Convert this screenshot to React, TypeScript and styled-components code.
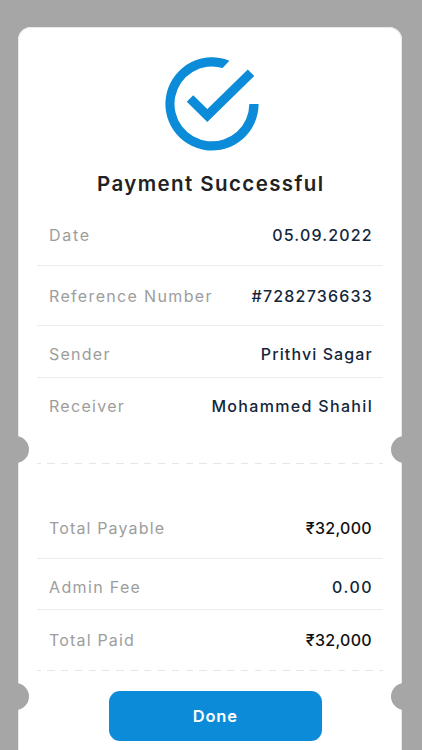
import React from 'react';
import styled, { createGlobalStyle } from 'styled-components';

const GlobalStyle = createGlobalStyle`
  *, *::before, *::after { box-sizing: border-box; }
  html, body { margin: 0; background: #a6a6a6; }
  body { font-family: Inter, "Liberation Sans", sans-serif; overflow: hidden; }
`;

const Screen = styled.div`
  display: flex;
  height: 750px;
  padding: 27px 20px 0 18px;
  overflow: hidden;
  background: #a6a6a6;
`;

const Card = styled.main`
  position: relative;
  display: flex;
  flex: 1;
  flex-direction: column;
  height: 760px;
  padding: 30px 19px 0;
  border-radius: 13px 13px 0 0;
  background: #fff;
  box-shadow: inset 0 0 0 1px #e9e9e9;
`;

const Notch = styled.span<{ $side: 'left' | 'right'; $top: number }>`
  position: absolute;
  top: ${(p) => p.$top}px;
  ${(p) => p.$side}: -16px;
  width: 27px;
  height: 27px;
  border-radius: 50%;
  background: #a6a6a6;
`;

const SuccessIcon = styled.svg`
  display: block;
  flex: none;
  width: 94px;
  height: 94px;
  margin-left: 127.5px;
`;

const Title = styled.h1`
  height: 26px;
  margin: 20px 0 7px 60px;
  color: #222;
  font-size: 20.5px;
  font-weight: 600;
  line-height: 26px;
  letter-spacing: 1.4px;
  white-space: nowrap;
`;

const Details = styled.dl`
  margin: 0;
`;

const Row = styled.div<{ $height: number; $shift?: number; $last?: boolean }>`
  display: flex;
  align-items: center;
  justify-content: space-between;
  height: ${(p) => p.$height}px;
  padding: ${(p) => p.$shift ?? 0}px 11.3px 0 12px;
  border-bottom: ${(p) => (p.$last ? '0' : '1px solid #ececec')};
`;

const Label = styled.dt<{ $tracking: number }>`
  color: #9d9d9d;
  font-size: 16px;
  line-height: 20px;
  letter-spacing: ${(p) => p.$tracking}px;
  white-space: nowrap;
`;

const Value = styled.dd<{ $tracking: number; $amount?: boolean }>`
  margin: 0 ${(p) => -p.$tracking}px 0 0;
  color: ${(p) => (p.$amount ? '#111' : '#14263b')};
  font-size: 16px;
  font-weight: 500;
  line-height: 20px;
  letter-spacing: ${(p) => p.$tracking}px;
  white-space: nowrap;
`;

const Perforation = styled.hr<{ $before: number; $after: number }>`
  width: 346px;
  height: 1px;
  margin: ${(p) => p.$before}px 0 ${(p) => p.$after}px;
  border: 0;
  background: repeating-linear-gradient(
    90deg,
    #e6e6e6 0 3.7px,
    transparent 3.7px 10.14px,
    #e6e6e6 10.14px 13.84px
  );
`;

const DoneButton = styled.button`
  flex: none;
  width: 212.5px;
  height: 50px;
  margin: 0 0 0 72px;
  padding: 1px 0 0;
  border: 0;
  border-radius: 11px;
  background: #0c8bd8;
  color: #fff;
  font-family: inherit;
  font-size: 16.5px;
  font-weight: 600;
  letter-spacing: 0.8px;
`;

type Item = {
  label: string;
  value: string;
  labelTracking: number;
  valueTracking: number;
  height: number;
  shift?: number;
  amount?: boolean;
};

const transfer: Item[] = [
  { label: 'Date', value: '05.09.2022', labelTracking: 1.75, valueTracking: 1.17, height: 62 },
  { label: 'Reference Number', value: '#7282736633', labelTracking: 1.34, valueTracking: 1.18, height: 60 },
  { label: 'Sender', value: 'Prithvi Sagar', labelTracking: 1.25, valueTracking: 1.1, height: 52, shift: 5 },
  { label: 'Receiver', value: 'Mohammed Shahil', labelTracking: 1.3, valueTracking: 1.33, height: 55 },
];

const totals: Item[] = [
  { label: 'Total Payable', value: '₹32,000', labelTracking: 1.15, valueTracking: 0.29, height: 62, amount: true },
  { label: 'Admin Fee', value: '0.00', labelTracking: 1.35, valueTracking: 1.6, height: 51, shift: 6 },
  { label: 'Total Paid', value: '₹32,000', labelTracking: 1.18, valueTracking: 0.29, height: 60, amount: true },
];

function DetailList({ items }: { items: Item[] }) {
  return (
    <Details>
      {items.map((item, i) => (
        <Row key={item.label} $height={item.height} $shift={item.shift} $last={i === items.length - 1}>
          <Label $tracking={item.labelTracking}>{item.label}</Label>
          <Value $tracking={item.valueTracking} $amount={item.amount}>
            {item.value}
          </Value>
        </Row>
      ))}
    </Details>
  );
}

export default function App() {
  return (
    <>
      <GlobalStyle />
      <Screen>
        <Card>
          <SuccessIcon viewBox="0 0 94 94" fill="none" aria-hidden="true">
            <path d="M93.6 47A46.6 46.6 0 1 1 64.4 3.7L57.6 11.1A37.4 37.4 0 1 0 84.3 47Z" fill="#0c8bd8" />
            <path d="M25 41.5L42.3 58.6L86 15.7" stroke="#0c8bd8" strokeWidth="9.2" />
          </SuccessIcon>
          <Title>Payment Successful</Title>
          <DetailList items={transfer} />
          <Perforation $before={30} $after={33} />
          <DetailList items={totals} />
          <Perforation $before={0} $after={19.5} />
          <DoneButton type="button">Done</DoneButton>
          <Notch $side="left" $top={409} />
          <Notch $side="right" $top={409} />
          <Notch $side="left" $top={656} />
          <Notch $side="right" $top={656} />
        </Card>
      </Screen>
    </>
  );
}
